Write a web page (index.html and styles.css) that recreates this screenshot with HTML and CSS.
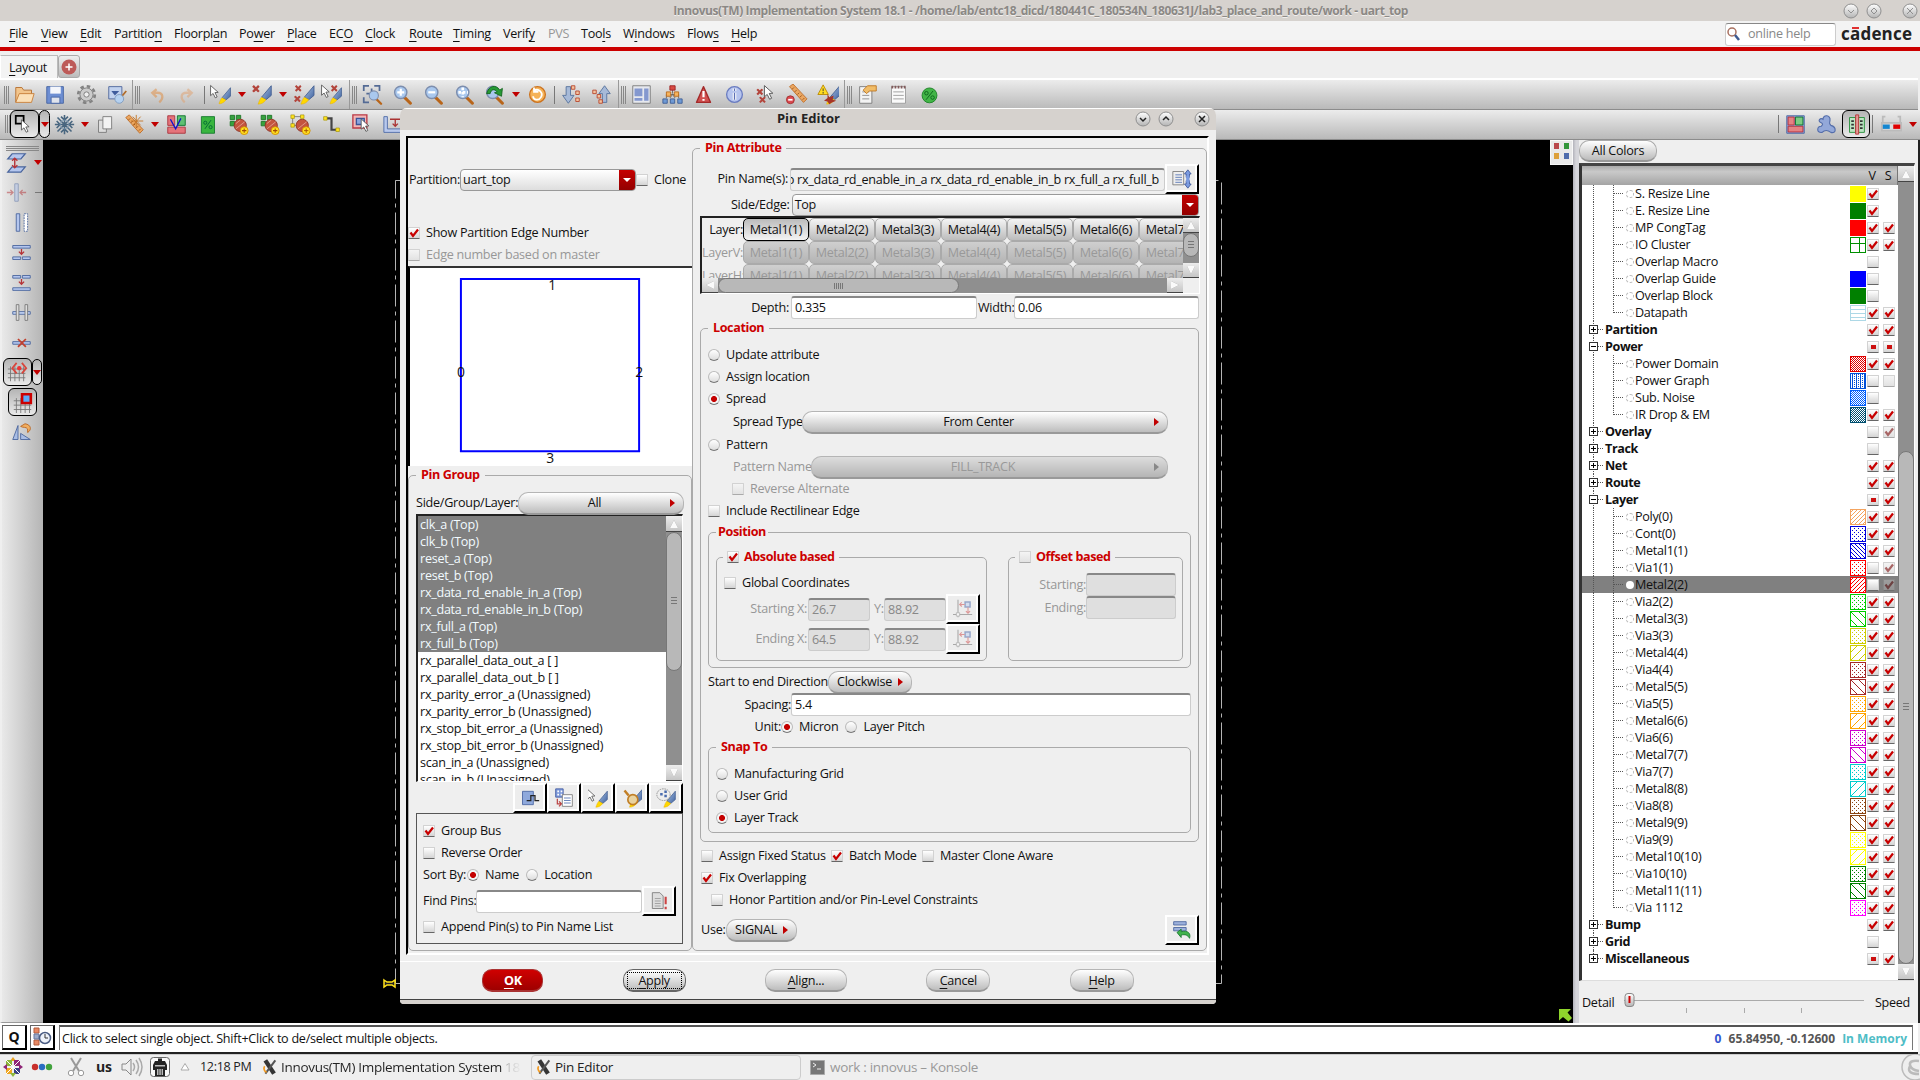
FILE: index.html
```
<!DOCTYPE html>
<html lang="en">
<head>
<meta charset="utf-8">
<title>Innovus - uart_top</title>
<link rel="stylesheet" href="styles.css">
</head>
<body>
<svg class="defs" width="0" height="0">
  <defs>
    <linearGradient id="gb" x1="0" y1="0" x2="1" y2="1"><stop offset="0" stop-color="#a9c3e6"/><stop offset="1" stop-color="#41639f"/></linearGradient>
    <linearGradient id="gk" x1="0" y1="0" x2="0" y2="1"><stop offset="0" stop-color="#fff"/><stop offset="1" stop-color="#b4b4b4"/></linearGradient>
    <symbol id="brush" viewBox="0 0 24 24"><path d="M22 2v11l-6 5-5-3z" fill="url(#gb)" stroke="#435f91"/><path d="M11 15l5 3c-2 3-5 5-9 5 1-3 2-6 4-8z" fill="#ffd800" stroke="#e8b000" stroke-width=".6"/></symbol>
    <symbol id="cur" viewBox="0 0 24 24"><path d="M3 2v14l3.500-3 3 6 2.500-1.200-3-6 4.500-.3z" fill="#fff" stroke="#4a4a4a" stroke-width="1.100"/></symbol>
    <symbol id="x" viewBox="0 0 8 8"><path d="M1 1l6 6M7 1l-6 6" stroke="#b3453c" stroke-width="2.400"/></symbol>
    <symbol id="mag" viewBox="0 0 24 24"><path d="M14 15l7 7" stroke="#b8651a" stroke-width="3.500" stroke-linecap="round"/><circle cx="10" cy="9.500" r="7" fill="#a9c8ee" stroke="#7d8eae" stroke-width="1.600"/></symbol>
    <symbol id="nofill" viewBox="0 0 24 24"><g fill="#36a23e" stroke="#1b7425"><path d="M2.500 1.500h5v5h-5zM9.500 1.500h5v5h-5zM2.500 8.500h5v5h-5z"/></g><circle cx="14" cy="13" r="7" fill="#c4543f" stroke="#8e3226"/><path d="M9 17l10-8M9 11l5-4" stroke="#e3a08f"/><circle cx="18.500" cy="19" r="4.500" fill="#ffdf20" stroke="#d18e00"/><path d="M16 19h5M18.500 16.500v5" stroke="#a44d00" stroke-width="1.200"/></symbol>
    <symbol id="grid" viewBox="0 0 24 24"><path d="M4 5v17M9 5v17M14 5v17M19 5v17M1 8h20M1 13h20M1 18h20" stroke="#777"/></symbol>
    <symbol id="ruler" viewBox="0 0 24 24"><path d="M2 4l4-3 16 17-4 4z" fill="#eaa660" stroke="#bd6c28"/><path d="M7 5l-2 2M10 8l-2 2M13 11l-2 2M16 14l-2 2M19 17l-2 2" stroke="#94501a"/></symbol>
    <symbol id="xy" viewBox="0 0 24 24"><g opacity=".5"><path d="M6 1v21M0 18.500h23" stroke="#666" stroke-width="1.300" fill="none"/><path d="M4 16.500h4v4H4z" fill="#fff" stroke="#777"/><path d="M14.500 3.500h6v6h-6z" fill="#bcd0f2" stroke="#4664a8" stroke-width="1.800"/><path d="M14 6.500H8M10.500 4L8 6.500l2.500 2.500M18 10v7M15.500 14.500L18 17l2.500-2.500" stroke="#ce4242" stroke-width="1.300" fill="none"/></g></symbol>
    <symbol id="xorg" viewBox="0 0 24 24"><path d="M5 2l13 20" stroke="#353535" stroke-width="6.500"/><path d="M20 2L5 22" stroke="#555" stroke-width="3"/><path d="M4 11a6 6 0 0 0 3 9" stroke="#f29a20" stroke-width="2.500" fill="none"/></symbol>
    <symbol id="chip" viewBox="0 0 24 24"><path d="M2 2h20v20H2z" fill="#91a6d6" stroke="#4664a2"/><path d="M3.500 3.500h7v9h-7zM3.500 14h17v6.500h-17z" fill="#e58383" stroke="#b42d3a"/><path d="M12 3.500h8.500v9H12z" fill="#7ecb83" stroke="#08702a"/></symbol>
  </defs>
</svg>

<header class="titlebar"><span>Innovus(TM) Implementation System 18.1 - /home/lab/entc18_dicd/180441C_180534N_180631J/lab3_place_and_route/work - uart_top</span>
  <div class="winbtns">
    <svg viewBox="0 0 16 16"><circle cx="8" cy="8" r="7"/><path d="M5 7l3 3 3-3"/></svg>
    <svg viewBox="0 0 16 16"><circle cx="8" cy="8" r="7"/><path d="M8 5l3 3-3 3-3-3z"/></svg>
    <svg class="last" viewBox="0 0 16 16"><circle cx="8" cy="8" r="7"/><path d="M5 5l6 6M11 5l-6 6"/></svg>
  </div>
</header>
<nav class="menubar">
  <span class="m1"><u>F</u>ile</span><span class="m2"><u>V</u>iew</span><span class="m3"><u>E</u>dit</span><span class="m4">Partitio<u>n</u></span><span class="m5">Floorpl<u>a</u>n</span><span class="m6">Po<u>w</u>er</span><span class="m7"><u>P</u>lace</span><span class="m8">EC<u>O</u></span><span class="m9"><u>C</u>lock</span><span class="m10"><u>R</u>oute</span><span class="m11"><u>T</u>iming</span><span class="m12">Verif<u>y</u></span><span class="m13 dis">PVS</span><span class="m14">Too<u>l</u>s</span><span class="m15">W<u>i</u>ndows</span><span class="m16">Flow<u>s</u></span><span class="m17"><u>H</u>elp</span>
  <div class="help"><svg width="14" height="14" viewBox="0 0 14 14"><circle cx="6" cy="5" r="4" fill="#fff" stroke="#a8705f" stroke-width="1.500"/><path d="M9 8l4 5" stroke="#3f5b91" stroke-width="2.500"/></svg>online help</div>
  <div class="brand">c<span class="bar">a</span>dence</div>
</nav>
<div class="tabs"><div class="tab"><u>L</u>ayout</div><div class="addtab"><svg width="16" height="16" viewBox="0 0 16 16"><circle cx="8" cy="8" r="7.500" fill="#bd5a58"/><path d="M8 4.500v7M4.500 8h7" stroke="#fff" stroke-width="1.500"/></svg></div></div>

<div class="toolbar t1">
  <div class="grp g1"><i class="grip"></i>
    <svg viewBox="0 0 24 24"><path d="M2 21V4h7l2 3h9v4" fill="#f2c58c" stroke="#b36c2b"/><path d="M2 21l4-10h17l-3 10z" fill="#fbe0b8" stroke="#c67c35"/></svg>
    <svg viewBox="0 0 24 24"><path d="M2 3h19v19H2z" fill="#6d8ed2" stroke="#4462a0"/><path d="M6 3h12v8H6z" fill="#f4f6fb"/><path d="M7 15h10v7H7z" fill="#dfe3ec" stroke="#4462a0"/></svg>
    <svg viewBox="0 0 24 24"><circle cx="12" cy="12" r="9.500" fill="none" stroke="#838383" stroke-width="3" stroke-dasharray="4 3.460"/><circle cx="12" cy="12" r="7.500" fill="#ccc" stroke="#777"/><circle cx="12" cy="12" r="3" fill="#eee" stroke="#777"/></svg>
    <svg viewBox="0 0 24 24"><path d="M2 3h15v14H2z" fill="#c2d2ee" stroke="#4a6299"/><path d="M5 8l4 5 5-5z" fill="#3f5c9c"/><path d="M17 14l5-6" stroke="#b06b2a" stroke-width="2"/><circle cx="14" cy="17" r="5" fill="#b5d1f0" stroke="#7e99bd"/></svg>
  </div>
  <div class="grp g2"><i class="grip"></i>
    <svg class="faint" viewBox="0 0 24 24"><path d="M6 10h6c7 0 7 7 2 11M11 6l-5 4 5 5" fill="none" stroke="#e08a3c" stroke-width="2.600"/></svg>
    <svg class="faint" viewBox="0 0 24 24"><path d="M18 10h-6c-7 0-7 7-2 11M13 6l5 4-5 5" fill="none" stroke="#e0a06c" stroke-width="2.600"/></svg>
    <i class="sep"></i>
    <svg viewBox="0 0 24 24"><use href="#cur" x="-3" y="-1" width="20" height="22"/><use href="#brush" x="3" y="2" width="21" height="22"/></svg><b class="dn"></b>
    <svg viewBox="0 0 24 24"><use href="#brush"/><use href="#x" x="0" y="1" width="9" height="9"/></svg><b class="dn"></b>
    <svg viewBox="0 0 24 24"><use href="#brush" x="2"/><use href="#x" x="2" y="1" width="8" height="8"/><use href="#x" x="1" y="13" width="8" height="8"/></svg>
    <svg viewBox="0 0 24 24"><use href="#brush" x="3" y="1" width="21"/><use href="#cur" x="-3" y="-1" width="20" height="21"/><use href="#x" x="10" y="1" width="8" height="8"/></svg>
  </div>
  <div class="grp g3"><i class="grip"></i>
    <svg viewBox="0 0 24 24"><path d="M2 8V2h6M14 2h6v6M2 15v6h6M5 11h12M11 5v12" stroke="#546b95" stroke-width="2" fill="none"/><use href="#mag" x="6" y="6" width="18" height="18"/></svg>
    <svg viewBox="0 0 24 24"><use href="#mag"/><path d="M6 9.500h8M10 5.500v8" stroke="#fff" stroke-width="2.500"/></svg>
    <svg viewBox="0 0 24 24"><use href="#mag"/><path d="M6 9.500h8" stroke="#fff" stroke-width="2.500"/></svg>
    <svg viewBox="0 0 24 24"><use href="#mag"/><path d="M10 4v11M5 9.500h11" stroke="#fff" stroke-width="3" stroke-dasharray="3 2"/></svg>
    <svg viewBox="0 0 24 24"><use href="#mag"/><path d="M3 11c2-9 11-11 15-4l3-2-1 9-8-4 3-1c-3-4-7-3-8 2z" fill="#279a35" stroke="#11641c"/></svg><b class="dn"></b>
    <svg viewBox="0 0 24 24"><circle cx="12" cy="12" r="9" fill="#f5b257" stroke="#cc7320" stroke-width="1.500"/><path d="M8 8c5-4 11 2 8 7s-9 3-9-1M8 4v5h5" fill="none" stroke="#fff" stroke-width="2"/></svg>
    <i class="sep"></i>
    <svg viewBox="0 0 24 24"><path d="M7 3h5v10h4l-6.500 9L3 13h4z" fill="#a7bad8" stroke="#53709c"/><path d="M13 2h4v4h-4zM18 8h4v4h-4zM18 16h4v4h-4z" fill="#f2c3a0" stroke="#b7452c"/></svg>
    <svg viewBox="0 0 24 24"><path d="M13 21V11H9l6.500-9 6.500 9h-4v10z" fill="#a7bad8" stroke="#53709c"/><path d="M2 7h4v4H2zM7 12h4v4H7zM9 18h4v4H9z" fill="#f2c3a0" stroke="#b7452c"/></svg>
  </div>
  <div class="grp g4"><i class="grip"></i>
    <svg viewBox="0 0 24 24"><path d="M2 2h20v20H2z" fill="#e6e8ee" stroke="#777"/><path d="M4 5h9v9H4zM15 5h5v14h-5zM4 16h9v3H4z" fill="#8498cf"/></svg>
    <svg viewBox="0 0 24 24"><path d="M12 6v5M5 16v-4h14v4M12 12l-3 4M12 12l3 4" stroke="#666" fill="none"/><path d="M9 2h6v5H9z" fill="#d84b44" stroke="#9a2020"/><path d="M5 9h5v5H5zM14 9h5v5h-5z" fill="#f5b35d" stroke="#b86818"/><path d="M1 17h5v5H1zM9.500 17h5v5h-5zM18 17h5v5h-5z" fill="#6f9ad5" stroke="#3c5b94"/></svg>
    <svg viewBox="0 0 24 24"><path d="M12 3l8 18H4z" fill="#d15050" stroke="#a32a2a" stroke-linejoin="round" stroke-width="1.500"/><path d="M12 8v7M12 17v2" stroke="#fff" stroke-width="2.500"/></svg>
    <svg viewBox="0 0 24 24"><circle cx="12" cy="12" r="9" fill="#b6c4ee" stroke="#6a7cc0" stroke-width="1.500"/><path d="M12 5v3M12 10v8" stroke="#fff" stroke-width="4"/><path d="M12 5v3M12 10v8" stroke="#5d6fb5" stroke-width="1.500"/></svg>
    <svg viewBox="0 0 24 24"><use href="#cur" x="8" y="0" width="22" height="22"/><use href="#x" x="1" y="5" width="9" height="8"/><use href="#x" x="4" y="14" width="9" height="8"/></svg>
    <svg viewBox="0 0 24 24"><use href="#ruler" x="2" y="-1"/><circle cx="5" cy="18" r="4.500" fill="#db4951" stroke="#a02f2d"/><path d="M2.500 18h5" stroke="#fff" stroke-width="2"/></svg>
    <svg viewBox="0 0 24 24"><use href="#brush" x="4"/><path d="M7 1l6 11H1z" fill="#ffdc20" stroke="#b98700"/><path d="M7 5v3M7 9v2" stroke="#333"/><path d="M12 11l2 4 5-2-1 5 4 1-5 2-3 2-2-3-4-1 4-3z" fill="#a63528"/></svg>
  </div>
  <div class="grp g5"><i class="grip"></i>
    <svg viewBox="0 0 24 24"><path d="M3 3h14v19H3z" fill="#f3f3f3" stroke="#777"/><path d="M6 9h8M6 13h8M6 17h8" stroke="#888"/><path d="M7 7l5-5h10v6h-8l-3 3z" fill="#f1bd68" stroke="#bd7521"/></svg>
    <svg viewBox="0 0 24 24"><path d="M4 3h16v19H4z" fill="#fafafa" stroke="#999"/><path d="M4 3.500h16" stroke="#825b5b" stroke-width="3" stroke-dasharray="2 1.500"/><path d="M6 9h12M6 13h12M6 17h12" stroke="#999"/></svg>
    <svg viewBox="0 0 24 24"><circle cx="12" cy="13" r="8.500" fill="#42b547" stroke="#197f24"/><path d="M8 18l8-10" stroke="#095f1a"/><circle cx="8.500" cy="10.500" r="2" fill="none" stroke="#095f1a"/><circle cx="15.500" cy="15.500" r="2" fill="none" stroke="#095f1a"/></svg>
  </div>
</div>

<div class="toolbar t2">
  <i class="grip"></i>
  <div class="pressed p1"><svg viewBox="0 0 24 24"><path d="M2 2h9v9H2z" fill="none" stroke="#000" stroke-width="2"/><use href="#cur" x="6" y="5" width="20" height="20"/></svg></div><div class="pressed p2"><b class="dn"></b></div>
  <svg viewBox="0 0 24 24"><path d="M12 1v22M1 12h22M4 4l16 16M20 4L4 20M8 3l4 4 4-4M8 21l4-4 4 4M3 8l4 4-4 4M21 8l-4 4 4 4" stroke="#49667f" stroke-width="1.800" fill="none"/><circle cx="12" cy="12" r="5" fill="none" stroke="#7e9ab3"/></svg><b class="dn"></b>
  <svg class="c26" viewBox="0 0 24 24"><path d="M4 7h9v14H4z" fill="#ddd" stroke="#777"/><path d="M9 3h10v14H9z" fill="#f2f2f2" stroke="#777"/></svg>
  <svg class="c34" viewBox="0 0 24 24"><use href="#ruler"/><path d="M14 1v14M8 8h14M10 3l9 10M19 3l-9 10" stroke="#c37324"/></svg><b class="dn"></b>
  <svg viewBox="0 0 24 24"><path d="M2 2h8v11H2zM2 15h20v7H2z" fill="#e5747b" stroke="#a8313a"/><path d="M13 2h9v11h-9z" fill="#5fc073" stroke="#08702a"/><path d="M5 6l6 11 6-12" stroke="#11c" stroke-width="1.500" fill="none"/></svg>
  <svg viewBox="0 0 24 24"><path d="M5 3h15v19H5z" fill="#39b53f" stroke="#13782b"/><path d="M9 17l7-10" stroke="#063"/><circle cx="9.500" cy="10" r="1.800" fill="none" stroke="#063"/><circle cx="15.500" cy="15" r="1.800" fill="none" stroke="#063"/></svg>
  <svg viewBox="0 0 24 24"><use href="#nofill"/></svg>
  <svg viewBox="0 0 24 24"><use href="#nofill"/></svg>
  <svg viewBox="0 0 24 24"><path d="M3 3h11M3 3v10h6" fill="none" stroke="#777"/><circle cx="14" cy="13" r="7" fill="#c4543f" stroke="#8e3226"/><path d="M9 17l10-8" stroke="#e3a08f"/><path d="M1 1h4v4H1zM12 1h4v4h-4zM1 11h4v4H1z" fill="#ffe320" stroke="#9a8b00" stroke-width=".7"/><circle cx="18.500" cy="19" r="4.500" fill="#ffdf20" stroke="#d18e00"/><path d="M16 19h5M18.500 16.500v5" stroke="#a44d00"/></svg>
  <svg viewBox="0 0 24 24"><path d="M6 5h6v13h6" fill="none" stroke="#444" stroke-width="2.500"/><path d="M3 3h4v4H3zM17 16h4v4h-4z" fill="#ffe320" stroke="#9a8b00" stroke-width=".7"/></svg>
  <svg viewBox="0 0 24 24"><path d="M1 1h16v15H1z" fill="#f2b6b6" stroke="#ba3945" stroke-width="1.500"/><path d="M5 5h9v7H5z" fill="#8aa4de" stroke="#3b5597" stroke-width="1.500"/><use href="#cur" x="8" y="4" width="20" height="20"/></svg>
  <svg viewBox="0 0 24 24"><path d="M1 3h4v14h19v4H1z" fill="#b9c9ec" stroke="#4a68a5"/><path d="M8 6h16M14 6v7M11 11l3 3 3-3" stroke="#a33" stroke-width="1.500" fill="none"/></svg>
  <i class="grow"></i><i class="sep"></i>
  <svg viewBox="0 0 24 24"><use href="#chip"/></svg>
  <svg viewBox="0 0 24 24"><path d="M8 6c0-6 9-5 8 1 0 3-2 3 1 6 7 2 6 10 0 8-4-3-7-3-10 0-7 1-6-7-1-7 2-2 2-3 0-4-5-2-1-6 2-4z" fill="#93a8d9" stroke="#536daa" stroke-width="1.300"/></svg>
  <div class="pressed p3"><svg viewBox="0 0 24 24"><path d="M4 4h7v17H4zM14 4h7v17h-7z" fill="#bce5c3" stroke="#218b36"/><path d="M6 8h3M6 12h3M6 16h3M16 8h3M16 12h3M16 16h3" stroke="#333" stroke-width="2"/><path d="M11 1h3.500v22H11z" fill="#e59696" stroke="#b52e2e"/></svg></div><i class="sep s0"></i>
  <svg class="glasses" viewBox="0 0 24 24"><path d="M2 10V3h3M22 10V3h-3M1 10h22v9H1z" fill="#ddd" stroke="#bbb" stroke-width="2"/><path d="M2 12h8v5H2z" fill="#1486d0"/><path d="M14 12h8v5h-8z" fill="#e00000"/></svg><b class="dn"></b>
</div>

<main class="work">
  <aside class="side">
    <i class="hgrip"></i>
    <div class="sd"><svg viewBox="0 0 24 24"><path d="M7 2h15l-5 6H2zM7 17h15l-5 6H2z" fill="#b4c6ee" stroke="#48649c" stroke-width="1.400"/><path d="M10 7v11M7 10l3-3 3 3M7 15l3 3 3-3" stroke="#b53338" stroke-width="1.600" fill="none"/></svg><b class="dn"></b></div>
    <div class="sd faint"><svg viewBox="0 0 24 24"><path d="M10 2h4v20h-4z" fill="#b4c6ee" stroke="#48649c"/><path d="M1 12h6M5 9l3 3-3 3M23 12h-6M19 9l-3 3 3 3" stroke="#b53338" stroke-width="1.500" fill="none"/></svg><b class="dash"></b></div>
    <div class="sc"><svg viewBox="0 0 24 24"><path d="M6 2h4v20H6z" fill="#b4c6ee" stroke="#48649c"/><path d="M15 2h4v20h-4z" fill="#fff" stroke="#48649c" stroke-dasharray="2 1"/></svg></div>
    <div class="sc"><svg viewBox="0 0 24 24"><path d="M2 4h20v3H2zM2 17h9v3H2zM13 17h9v3h-9z" fill="#b4c6ee" stroke="#48649c"/><path d="M12 8v6M9 11l3 3 3-3" stroke="#b53338" stroke-width="1.500" fill="none"/></svg></div>
    <div class="sc"><svg viewBox="0 0 24 24"><path d="M2 18h20v3H2zM2 4h9v3H2zM13 4h9v3h-9z" fill="#b4c6ee" stroke="#48649c"/><path d="M12 8v6M9 11l3 3 3-3" stroke="#b53338" stroke-width="1.500" fill="none"/></svg></div>
    <div class="sc"><svg viewBox="0 0 24 24"><path d="M2 11h20v3H2z" fill="#c6d6f6" stroke="#48649c"/><path d="M6 3h3v18H6zM16 3h3v18h-3z" fill="#ddd" stroke="#777"/></svg></div>
    <div class="sc"><svg viewBox="0 0 24 24"><path d="M2 11h20v3H2z" fill="#b4c6ee" stroke="#48649c"/><path d="M8 8l9 9M17 8l-9 9" stroke="#c2402e" stroke-width="2"/></svg></div>
    <div class="sp"><div class="pressed q1"><svg viewBox="0 0 24 24"><use href="#grid"/><path d="M11 1L6 7l5 6M17 1l5 6-5 6" stroke="#d8453c" stroke-width="2" fill="none"/><circle cx="14" cy="7" r="2.500" fill="#e33"/></svg></div><div class="pressed q2"><b class="dn"></b></div></div>
    <div class="sp2"><div class="pressed q3"><svg viewBox="0 0 24 24"><use href="#grid" x="1" y="2"/><path d="M11.500 2.500h10v10h-10z" fill="#5ba9f7" stroke="#cc0000" stroke-width="3"/></svg></div></div>
    <div class="sc"><svg viewBox="0 0 24 24"><path d="M2 20L8 4v16zM11 20V13l11 7z" fill="#a9bde4" stroke="#48649c"/><path d="M11 5l5-3c7 1 8 7 3 10v-4c-2-3-5-1-8-3z" fill="#f0ae60" stroke="#b96420"/></svg></div>
  </aside>
  <section class="canvas">
    <svg class="design" width="1530" height="883" viewBox="43 140 1530 883"><path d="M395.500 180.500H1221.500V983.500H395.500z" fill="none" stroke="#b4b4b4" stroke-dasharray="22 5 4 5"/><path d="M384 980l3 2h5l3-2v7l-3-2h-5l-3 2z" fill="#222" stroke="#ffe21a" stroke-width="1.500"/><path d="M1559 1009h12l-3.500 3.500 4.500 5.500-3.500 3.500-5.500-4.500-4 3.500z" fill="#8fd42c"/></svg>
    <div class="corner"><i class="c1"></i><i class="c2"></i><i class="c3"></i><i class="c4"></i></div>
  </section>
  <div class="split"></div>
  <aside class="colors">
    <div class="allc">All Colors</div>
    <div class="treebox">
      <div class="treemain"><div class="treehead"><span>V</span><span>S</span></div><div class="tree" id="tree"></div></div>
      <div class="vs"><i class="ar up"></i><i class="track"><i class="thumb"></i></i><i class="ar down"></i></div>
    </div>
    <div class="detail"><span>Detail</span><svg width="250" height="30" viewBox="0 0 250 30"><path d="M2 11.500h240" stroke="#aaa"/><path d="M64.500 19v5M122.500 19v5M179.500 19v5" stroke="#aaa"/><rect x="3" y="4.500" width="9" height="13" rx="3" fill="url(#gk)" stroke="#888"/><path d="M7.500 7v7" stroke="#c00" stroke-width="2"/></svg><span>Speed</span></div>
  </aside>
</main>

<div class="status">
  <div class="qb">Q</div><div class="qb q2b"><svg width="20" height="20" viewBox="0 0 20 20"><path d="M2 1h5v5H2zM2 13h5v5H2z" fill="#e88964" stroke="#b35b3b"/><path d="M2 7h5v5H2z" fill="#9dabc9" stroke="#66789f"/><circle cx="13" cy="11" r="5.500" fill="#eef2fa" stroke="#4b5d83" stroke-width="1.500"/><path d="M13 7v4h3" stroke="#333" fill="none"/></svg></div>
  <div class="msg"><span>Click to select single object. Shift+Click to de/select multiple objects.</span><b><i class="n0">0</i> <i class="xyv">65.84950, -0.12600</i> <i class="mem">In Memory</i></b></div>
</div>

<footer class="taskbar">
  <svg class="k1" width="20" height="20" viewBox="0 0 20 20"><path d="M10 0l3 4H7z" fill="#e8a020"/><path d="M3 3h6v6H3z" fill="#8cb63a"/><path d="M11 3h6v6h-6z" fill="#8f2577"/><path d="M3 11h6v6H3z" fill="#efa724"/><path d="M11 11h6v6h-6z" fill="#3a3f85"/><path d="M0 10l4-3v6zM20 10l-4-3v6z" fill="#8f2577"/><path d="M10 20l3-4H7z" fill="#8cb63a"/><path d="M3 3l14 14M17 3L3 17" stroke="#fff"/></svg>
  <svg class="k2" width="22" height="10" viewBox="0 0 22 10"><circle cx="4" cy="5" r="3.200" fill="#c8302c"/><circle cx="11" cy="5" r="3.200" fill="#2a6ec2"/><circle cx="18" cy="5" r="3.200" fill="#40a23c"/></svg>
  <svg class="k3" width="18" height="20" viewBox="0 0 18 20"><path d="M4 1l8 13M14 1L6 14" stroke="#999" stroke-width="2"/><circle cx="4" cy="16" r="2.700" fill="#fff" stroke="#999"/><circle cx="14" cy="16" r="2.700" fill="#fff" stroke="#999"/></svg>
  <b class="us">us</b>
  <svg class="k4" width="22" height="22" viewBox="0 0 22 22"><path d="M1 8h4l5-5v16l-5-5H1z" fill="#eee" stroke="#888"/><path d="M12 7q3 4 0 8M15 4q5 7 0 14M18 2q6 9 0 18" stroke="#aaa" stroke-width="1.500" fill="none"/></svg>
  <svg class="k5" width="20" height="22" viewBox="0 0 20 22"><rect x=".5" y="1.500" width="19" height="19" rx="3" fill="#f8f8f8" stroke="#666"/><path d="M8 2.500h4V5h3l2 4v5h-2v6H5v-6H3V9l2-4h3z" fill="#222"/><path d="M5 9h10v1.500H5zM7 13h1.500v6H7zM9.300 13h1.500v6H9.300zM11.600 13H13v6h-1.400z" fill="#bbb"/></svg>
  <svg class="k6" width="10" height="10" viewBox="0 0 10 10"><path d="M5 1.500l4 6.500H1z" fill="#fff" stroke="#aaa"/></svg>
  <span class="clock">12:18 PM</span>
  <div class="task a"><svg width="16" height="16" viewBox="0 0 24 24"><use href="#xorg"/></svg><span class="fade">Innovus(TM) Implementation System 18</span></div>
  <div class="task b"><svg width="16" height="16" viewBox="0 0 24 24"><use href="#xorg"/></svg><span>Pin Editor</span></div>
  <div class="task c"><svg width="15" height="15" viewBox="0 0 15 15"><path d="M.5.500h14v14H.5z" fill="#777" stroke="#aaa"/><path d="M3 3l3 2-3 2M7 9h4" stroke="#eee" fill="none"/></svg><span>work : innovus – Konsole</span></div>
  <svg class="swirl" width="20" height="26" viewBox="0 0 20 26"><circle cx="15" cy="13" r="13" fill="#eee" stroke="#bbb" stroke-width="1.500"/><path d="M19 7q-10-1-9 4t9 6M10 12q-4 8 9 8" stroke="#bbb" stroke-width="2.500" fill="none"/></svg>
</footer>

<div class="dialog">
  <div class="dtitle"><span>Pin Editor</span>
    <div class="winbtns dark">
      <svg viewBox="0 0 16 16"><circle cx="8" cy="8" r="7"/><path d="M5 7l3 3 3-3"/></svg>
      <svg class="second" viewBox="0 0 16 16"><circle cx="8" cy="8" r="7"/><path d="M5 9l3-3 3 3"/></svg>
      <svg class="last" viewBox="0 0 16 16"><circle cx="8" cy="8" r="7"/><path d="M5 5l6 6M11 5l-6 6"/></svg>
    </div>
  </div>
  <div class="dbody">
    <div class="left">
      <div class="row part"><span>Partition:</span><div class="combo pc"><span>uart_top</span><i></i></div><i class="cb"></i><span class="lb">Clone</span></div>
      <div class="row show"><i class="cb on"></i><span class="lb">Show Partition Edge Number</span></div>
      <div class="row dis"><i class="cb off"></i><span class="lb">Edge number based on master</span></div>
      <svg class="preview" width="284" height="200" viewBox="0 0 284 200"><path d="M51 11h180v174H51z" fill="none" stroke="#0000ff" stroke-width="2"/><text x="143" y="22">1</text><text x="51" y="110">0</text><text x="231" y="110">2</text><text x="141" y="197">3</text></svg>
      <fieldset class="pg"><legend>Pin Group</legend>
        <div class="row r1"><span>Side/Group/Layer:</span><div class="pill"><span>All</span><b class="rt"></b></div></div>
        <div class="list"><div class="items">
          <p class="s">clk_a (Top)</p><p class="s">clk_b (Top)</p><p class="s">reset_a (Top)</p><p class="s">reset_b (Top)</p><p class="s">rx_data_rd_enable_in_a (Top)</p><p class="s">rx_data_rd_enable_in_b (Top)</p><p class="s">rx_full_a (Top)</p><p class="s">rx_full_b (Top)</p><p>rx_parallel_data_out_a [ ]</p><p>rx_parallel_data_out_b [ ]</p><p>rx_parity_error_a (Unassigned)</p><p>rx_parity_error_b (Unassigned)</p><p>rx_stop_bit_error_a (Unassigned)</p><p>rx_stop_bit_error_b (Unassigned)</p><p>scan_in_a (Unassigned)</p><p>scan_in_b (Unassigned)</p>
        </div><div class="vs"><i class="ar up"></i><i class="track"><i class="thumb"></i></i><i class="ar down"></i></div></div>
        <div class="tools">
          <div class="bev"><svg viewBox="0 0 24 24"><path d="M3 4h13v16H3z" fill="#8fa9dc" stroke="#4662a0"/><path d="M8 15h5V9h5v6h5" fill="none" stroke="#222" stroke-width="1.500"/></svg></div>
          <div class="bev"><svg viewBox="0 0 24 24"><path d="M2 1h9v10H2z" fill="#7e9ada" stroke="#4059a0"/><path d="M4 4h2M8 4h2M4 8h2M8 8h2" stroke="#fff" stroke-width="2"/><path d="M4 13v6h4M6 16l3 3-3 3" fill="none" stroke="#b44" stroke-width="1.500"/><path d="M10 8h12v14H10z" fill="#fff" stroke="#777"/><path d="M12 12h8M12 15h8M12 18h8" stroke="#5070b0"/></svg></div>
          <div class="bev"><svg viewBox="0 0 24 24"><use href="#cur" x="-3" y="-1" width="20" height="22"/><use href="#brush" x="3" y="1" width="22"/></svg></div>
          <div class="bev"><svg viewBox="0 0 24 24"><use href="#brush" x="2"/><circle cx="13" cy="14" r="6" fill="#e9d3a0" stroke="#c17e25" stroke-width="2"/><path d="M3 3l5 6" stroke="#c17e25" stroke-width="3"/></svg></div>
          <div class="bev"><svg viewBox="0 0 24 24"><use href="#brush" x="3" y="1" width="22"/><ellipse cx="9" cy="8" rx="8" ry="7" fill="#eee" stroke="#888" stroke-dasharray="2 1"/><path d="M5 6h3v3H5zM10 3h3v3h-3zM10 8h3v3h-3z" fill="#4a6cae"/></svg></div>
        </div>
        <div class="box">
          <div class="row"><i class="cb on"></i><span class="lb">Group Bus</span></div>
          <div class="row"><i class="cb"></i><span class="lb">Reverse Order</span></div>
          <div class="row"><span class="sb">Sort By:</span><i class="rd on"></i><span class="lr">Name</span><i class="rd sp8"></i><span class="lr">Location</span></div>
          <div class="row find"><span>Find Pins:</span><div class="inp fp"></div><div class="bev"><svg viewBox="0 0 24 24"><path d="M4 2h9l4 4v15H4z" fill="#ddd" stroke="#777"/><path d="M7 9h7M7 12h7M7 15h7M7 18h7" stroke="#999"/><path d="M20 7v9M20 19v3" stroke="#c44" stroke-width="2.500"/></svg></div></div>
          <div class="row"><i class="cb"></i><span class="lb">Append Pin(s) to Pin Name List</span></div>
        </div>
      </fieldset>
    </div>

    <fieldset class="pa"><legend>Pin Attribute</legend>
      <div class="row pins"><span class="rl">Pin Name(s):</span><div class="inp ro"><span>reset_b rx_data_rd_enable_in_a rx_data_rd_enable_in_b rx_full_a rx_full_b</span></div><div class="bev"><svg viewBox="0 0 24 24"><path d="M1 3h13v16H1z" fill="#eee" stroke="#777"/><path d="M4 7h8M4 10h8M4 13h8M4 16h8" stroke="#4f70b5"/><path d="M19 1l4 5h-2v4h-4V6h-2zM19 23l4-5h-2v-4h-4v4h-2z" fill="#7b9be0" stroke="#3c5697"/><path d="M17 8h4v8h-4z" fill="#7b9be0"/></svg></div></div>
      <div class="row"><span class="rl">Side/Edge:</span><div class="combo se"><span>Top</span><i></i></div></div>
      <div class="layers">
        <div class="lv"><div class="lrows">
          <div class="lrow"><span>Layer:</span><b class="sel">Metal1(1)</b><b>Metal2(2)</b><b>Metal3(3)</b><b>Metal4(4)</b><b>Metal5(5)</b><b>Metal6(6)</b><b>Metal7(7)</b></div>
          <div class="lrow d"><span>LayerV:</span><b>Metal1(1)</b><b>Metal2(2)</b><b>Metal3(3)</b><b>Metal4(4)</b><b>Metal5(5)</b><b>Metal6(6)</b><b>Metal7(7)</b></div>
          <div class="lrow d"><span>LayerH:</span><b>Metal1(1)</b><b>Metal2(2)</b><b>Metal3(3)</b><b>Metal4(4)</b><b>Metal5(5)</b><b>Metal6(6)</b><b>Metal7(7)</b></div>
        </div><div class="vs"><i class="ar up"></i><i class="track"><i class="thumb"></i></i><i class="ar down"></i></div></div>
        <div class="hs"><i class="ar lf"></i><i class="track"><i class="thumb"></i></i><i class="ar rg"></i></div>
      </div>
      <div class="row depth"><span class="rl">Depth:</span><div class="inp dw">0.335</div><span class="wl">Width:</span><div class="inp dw2">0.06</div></div>
      <fieldset class="loc"><legend>Location</legend>
        <div class="row first"><i class="rd"></i><span class="lr">Update attribute</span></div>
        <div class="row"><i class="rd"></i><span class="lr">Assign location</span></div>
        <div class="row"><i class="rd on"></i><span class="lr">Spread</span></div>
        <div class="row st"><span class="stl">Spread Type</span><div class="pill"><span>From Center</span><b class="rt"></b></div></div>
        <div class="row"><i class="rd"></i><span class="lr">Pattern</span></div>
        <div class="row pn dis"><span class="pnl">Pattern Name</span><div class="pill dp"><span>FILL_TRACK</span><b class="rt"></b></div></div>
        <div class="row ra dis"><i class="cb off"></i><span class="lb">Reverse Alternate</span></div>
        <div class="row"><i class="cb"></i><span class="lb">Include Rectilinear Edge</span></div>
        <fieldset class="pos"><legend>Position</legend>
          <div class="cols">
            <fieldset class="abs"><legend><i class="cb on"></i>Absolute based</legend>
              <div class="row g"><i class="cb"></i><span class="lb">Global Coordinates</span></div>
              <div class="row co dis"><span class="cx">Starting X:</span><div class="inp di">26.7</div><span class="cy">Y:</span><div class="inp di">88.92</div><div class="bev"><svg viewBox="0 0 24 24"><use href="#xy"/></svg></div></div>
              <div class="row co dis"><span class="cx">Ending X:</span><div class="inp di">64.5</div><span class="cy">Y:</span><div class="inp di">88.92</div><div class="bev"><svg viewBox="0 0 24 24"><use href="#xy"/></svg></div></div>
            </fieldset>
            <fieldset class="off2"><legend><i class="cb off"></i>Offset based</legend>
              <div class="row o dis"><span class="cx">Starting:</span><div class="inp di"></div></div>
              <div class="row dis"><span class="cx">Ending:</span><div class="inp di"></div></div>
            </fieldset>
          </div>
        </fieldset>
        <div class="row dir"><span>Start to end Direction</span><div class="pill"><span>Clockwise</span><b class="rt"></b></div></div>
        <div class="row spc"><span>Spacing:</span><div class="inp">5.4</div></div>
        <div class="row unit"><span>Unit:</span><i class="rd on"></i><span class="lr">Micron</span><i class="rd sp8"></i><span class="lr">Layer Pitch</span></div>
        <fieldset class="snap"><legend>Snap To</legend>
          <div class="row first"><i class="rd"></i><span class="lr">Manufacturing Grid</span></div>
          <div class="row"><i class="rd"></i><span class="lr">User Grid</span></div>
          <div class="row"><i class="rd on"></i><span class="lr">Layer Track</span></div>
        </fieldset>
      </fieldset>
      <div class="row fix"><i class="cb"></i><span class="lb w1">Assign Fixed Status</span><i class="cb on"></i><span class="lb w2">Batch Mode</span><i class="cb"></i><span class="lb">Master Clone Aware</span></div>
      <div class="row"><i class="cb on"></i><span class="lb">Fix Overlapping</span></div>
      <div class="row honor"><i class="cb"></i><span class="lb">Honor Partition and/or Pin-Level Constraints</span></div>
      <div class="row use"><span>Use:</span><div class="pill"><span>SIGNAL</span><b class="rt"></b></div><i class="grow"></i><div class="bev"><svg viewBox="0 0 24 24"><path d="M2 2h15v4H2zM2 9h15v4H2z" fill="#9db1dc" stroke="#47619b"/><path d="M6 15l5-4v3c8-2 12 2 10 8-2-4-5-5-10-4v3z" fill="#41b34c" stroke="#15762b"/></svg></div></div>
    </fieldset>
  </div>
  <div class="dbtns"><div class="pill ok"><u>O</u>K</div><div class="pill ap"><em><u>A</u>pply</em></div><div class="pill al"><u>A</u>lign...</div><div class="pill ca"><u>C</u>ancel</div><div class="pill ca"><u>H</u>elp</div></div>
  <div class="dfoot"></div>
</div>
<script src="script.js"></script>
</body>
</html>
```
FILE: styles.css
```
* { box-sizing: border-box; }
html, body { margin: 0; height: 1080px; overflow: hidden; }
body { width: 1920px; display: flex; flex-direction: column; background: #efefef; color: #111; font: 12.6px/18px "Open Sans", "Noto Sans", sans-serif; letter-spacing: -0.27px; white-space: nowrap; }
p, fieldset, legend { margin: 0; padding: 0; }
i, em { font-style: normal; }
u { text-underline-offset: 3px; text-decoration-thickness: 1px; }
svg { flex: none; display: block; }
.defs { position: absolute; }
.dis { color: #979797; }
.grow { flex: 1; }
.faint { opacity: .5; }

.titlebar { height: 21px; flex: none; background: #d6d2ce; display: flex; align-items: center; justify-content: flex-end; color: #8b8885; font-weight: bold; font-size: 12px; letter-spacing: -.41px; text-shadow: 0 1px #f2f0ee; }
.titlebar .winbtns { margin-left: 435px; }
.winbtns { display: flex; }
.winbtns svg { width: 16px; height: 16px; margin-right: 7px; fill: url(#gk); stroke: #8f8f8f; }
.winbtns .last { margin-left: 13px; margin-right: 2px; }
.winbtns path { fill: none; }
.winbtns.dark path { stroke: #222; stroke-width: 1.5; }
.menubar { height: 26px; flex: none; background: #f3f3f3; display: flex; align-items: center; padding-left: 9px; }
.m1 { width: 32px; } .m2 { width: 39px; } .m3 { width: 34px; } .m4 { width: 60px; } .m5 { width: 65px; } .m6 { width: 48px; } .m7 { width: 42px; } .m8 { width: 36px; } .m9 { width: 44px; } .m10 { width: 44px; } .m11 { width: 50px; } .m12 { width: 45px; } .m13 { width: 33px; } .m14 { width: 42px; } .m15 { width: 64px; } .m16 { width: 44px; }
.help { margin-left: auto; width: 111px; height: 23px; background: #fff; border: 1px solid #ccc; border-top: 1px solid #888; border-radius: 3px; display: flex; align-items: center; gap: 8px; color: #888; }
.brand { width: 84px; padding-left: 5px; font: bold 17px/22px "Open Sans", sans-serif; letter-spacing: .2px; color: #222; }
.bar { display: inline-block; line-height: 13px; background: linear-gradient(#e03030, #e03030) center 0 / 7px 2px no-repeat; }
.tabs { height: 31px; flex: none; border-top: 4px solid #cc0000; display: flex; align-items: flex-end; }
.tab { width: 58px; height: 23px; border: 1px solid #bbb; border-bottom: 0; border-left-color: #fff; padding: 3px 0 0 8px; background: #f3f3f3; }
.addtab { width: 22px; height: 23px; border: 1px solid #aaa; border-radius: 3px; background: linear-gradient(#eee, #bbb); display: flex; align-items: center; justify-content: center; }

.toolbar { flex: none; display: flex; align-items: center; background: linear-gradient(#ececec, #b9b9b9); border-bottom: 1px solid #8c8c8c; }
.toolbar svg { width: 23px; height: 21px; margin: 0 4px; }
.t1 { height: 32px; border-top: 2px solid #fff; padding-left: 2px; margin-right: 2px; }
.grp { display: flex; align-items: center; height: 29px; border-right: 1px solid #999; }
.g1 { width: 131px; } .g2 { width: 217px; } .g3 { width: 269px; } .g4 { width: 226px; } .g5 { border: 0; }
.grip { width: 5px; height: 18px; border-left: 1px solid #888; border-right: 1px solid #888; background: linear-gradient(90deg, transparent 1px, #888 1px 2px, transparent 2px); margin: 0 0 0 2px; flex: none; }
.sep { width: 1px; height: 18px; background: #777; margin: 0 1px; flex: none; }
.toolbar .g2 svg { margin: 0 3px; }
.g2 .grip { margin-right: 3px; } .g2 .sep { margin: 0 2px 0 3px; }
.toolbar .g3 svg { margin: 0 3.8px; }
.dn { width: 12px; flex: none; display: flex; justify-content: center; }
.dn::before { content: ""; border: 4px solid transparent; border-top: 5px solid #c00000; border-bottom: 0; }
.t2 { height: 30px; padding: 0 1px 1px 3px; }
.pressed { border: 1px solid #000; border-radius: 6px; display: flex; align-items: center; justify-content: center; background: linear-gradient(#b5b5b5, #e9e9e9); flex: none; }
.p1 { width: 29px; height: 28px; } .p2 { width: 11px; height: 28px; } .p3 { width: 28px; height: 28px; }
.t2 .p2 + svg { margin: 0 3px; }
.toolbar .c26 { margin: 0 3px; } .toolbar .c34 { margin: 0 3px; }
.toolbar .glasses { margin: 0 4px 0 5px; }
.s0 { margin: 0 2px; }

.work { height: 883px; flex: none; display: flex; }
.side { width: 43px; border-left: 2px solid #efefef; background: linear-gradient(90deg, #e9e9e9, #b5b5b5); border-bottom: 1px solid #999; }
.hgrip { display: block; height: 5px; margin: 6px 4px -4px; border-top: 1px solid #888; border-bottom: 1px solid #888; background: linear-gradient(transparent 1px, #888 1px 2px, transparent 2px); }
.side svg { width: 21px; height: 21px; }
.sd, .sc, .sp, .sp2 { height: 30px; display: flex; align-items: center; }
.sd svg { margin: 0 5px 0 4px; }
.dash { width: 7px; height: 1px; background: #333; margin-left: 3px; }
.sc svg { margin-left: 9px; }
.sp { padding-left: 1px; }
.q1 { width: 29px; height: 28px; } .q2 { width: 10px; height: 26px; }
.q3 { width: 29px; height: 28px; margin-left: 6px; }
.canvas { width: 1530px; background: #000; position: relative; }
.corner { position: absolute; right: 0; top: 0; width: 23px; height: 25px; background: #e9e9e9; border: 1px solid #f8f8f8; display: grid; grid-template-columns: 5px 5px; grid-auto-rows: 6px; gap: 4px 5px; padding: 2px 3px; }
.c1 { background: #b9484b; } .c2 { background: #33963a; } .c3 { background: #dda03b; } .c4 { background: #4f6cac; }
.split { width: 6px; background: linear-gradient(90deg, #b3b3bb, #d5d5da 3px); }
.colors { width: 341px; display: flex; flex-direction: column; border-right: 2px solid #222; }
.allc { width: 78px; height: 22px; border: 1px solid #aaa; border-bottom: 2px solid #999; border-radius: 10px; background: linear-gradient(#fff, #bbb); text-align: center; line-height: 20px; }
.treebox { margin: 1px 3px 0 0; height: 818px; border: 3px solid #333; border-right: 1px solid #fff; border-bottom: 1px solid #ddd; border-top-color: #444; background: #fff; display: flex; }
.treemain { flex: 1; overflow: hidden; }
.treehead { height: 19px; background: linear-gradient(#aaa, #c9c9c9 30%, #a4a4a4); display: flex; justify-content: flex-end; padding-right: 1px; border-right: 1px solid #777; }
.treehead span { width: 16px; text-align: center; line-height: 19px; }
.tr { height: 17px; display: flex; align-items: center; line-height: 17px; }
.tr.hl { background: #808080; }
.tr .v1 { width: 12px; align-self: stretch; border-right: 1px dotted #555; flex: none; }
.tr.lastg .v1 { height: 8px; align-self: flex-start; }
.tr .v2 { width: 20px; align-self: stretch; border-right: 1px dotted #555; flex: none; }
.tr.end .v2 { height: 9px; align-self: flex-start; }
.tr .h { width: 9px; border-top: 1px dotted #555; flex: none; }
.tr .o { width: 8px; height: 8px; border: 1px dashed #bbb; border-radius: 50%; margin: 0 1px 0 3px; flex: none; }
.tr.hl .o { background: #fff; border-color: #fff; }
.tr .ex { width: 9px; height: 9px; border: 1px solid #333; background: #fff; margin: 0 0 0 -5px; flex: none; display: flex; align-items: center; justify-content: center; }
.tr .ex::before { content: ""; width: 5px; height: 5px; background: linear-gradient(#000, #000) 0 2px / 5px 1px no-repeat; }
.tr .ex.plus::before { background: linear-gradient(#000, #000) 0 2px / 5px 1px no-repeat, linear-gradient(#000, #000) 2px 0 / 1px 5px no-repeat; }
.tr .hh { width: 5px; border-top: 1px dotted #555; margin-right: 2px; flex: none; }
.tr .nm { flex: 1; }
.tr .nm.g { font-weight: bold; letter-spacing: -.4px; }
.sw { width: 16px; height: 16px; background: #fff; shape-rendering: crispEdges; }
.c16 { width: 16px; height: 17px; flex: none; display: flex; align-items: center; }
.c16 .cb { margin-left: 1px; }

.cb { width: 12px; height: 12px; flex: none; display: inline-block; background: linear-gradient(#fff, #d4d4d4); border: 1px solid #d2d2d2; border-bottom: 1px solid #666; border-radius: 1px; }
.cb.on { background: url("data:image/svg+xml,%3Csvg xmlns='http://www.w3.org/2000/svg' viewBox='0 0 10 10'%3E%3Cpath d='M1.500 4.500l2.500 3.500L9 1.500' fill='none' stroke='%23c80000' stroke-width='2.200'/%3E%3C/svg%3E") no-repeat, linear-gradient(#fff, #d4d4d4); }
.cb.off { background: linear-gradient(#f4f4f4, #e2e2e2); border-bottom-color: #aaa; }
.cb.on.off { background: url("data:image/svg+xml,%3Csvg xmlns='http://www.w3.org/2000/svg' viewBox='0 0 10 10'%3E%3Cpath d='M1.500 4.500l2.500 3.500L9 1.500' fill='none' stroke='%23a86565' stroke-width='2.200'/%3E%3C/svg%3E") no-repeat, linear-gradient(#f4f4f4, #e2e2e2); }
.hl .cb.on.off { filter: brightness(.65); }
.cb.part2 { background: linear-gradient(#cc1010, #cc1010) 3px 3px / 5px 4px no-repeat, linear-gradient(#fff, #d4d4d4); }
.lb { margin-left: 6px; }
.rd { width: 12px; height: 12px; flex: none; border-radius: 50%; border: 1px solid #bbb; border-bottom-color: #777; background: linear-gradient(#fff, #ddd); }
.rd.on { background: radial-gradient(circle, #c40000 0 2.6px, #f4f4f4 3.4px); }
.lr { margin-left: 6px; }
.rd.sp8 { margin-left: 7px; }

.vs { width: 16px; flex: none; display: flex; flex-direction: column; background: #8f8f8f; }
.ar { width: 16px; height: 16px; flex: none; background: linear-gradient(#ececec, #c6c6c6); border-bottom: 1px solid #444; display: flex; align-items: center; justify-content: center; }
.ar::before { content: ""; border: 4px solid transparent; filter: drop-shadow(0 0 .6px #888); }
.up::before { border-bottom: 8px solid #fafafa; border-top: 0; }
.down::before { border-top: 8px solid #fafafa; border-bottom: 0; }
.lf::before { border-right: 8px solid #fafafa; border-left: 0; }
.rg::before { border-left: 8px solid #fafafa; border-right: 0; }
.track { flex: 1; display: flex; flex-direction: column; }
.thumb { display: block; border: 1px solid #777; border-radius: 8px; background: repeating-linear-gradient(#777 0 1px, transparent 1px 3px) center / 6px 9px no-repeat, #b8b8b8; }
.colors .thumb { margin-top: 269px; height: 513px; }
.detail { display: flex; align-items: center; padding: 0 8px 0 3px; margin-top: 4px; height: 36px; justify-content: space-between; }
.detail svg { margin-left: 5px; margin-top: 2px; }

.status { height: 31px; flex: none; border-top: 2px solid #fff; border-bottom: 2px solid #222; display: flex; align-items: center; background: #fff; padding: 0 5px 2px 2px; margin-right: 2px; }
.qb { width: 25px; height: 25px; border: 1px solid #666; border-right: 2px solid #000; border-bottom: 2px solid #000; font-weight: bold; font-size: 14px; text-align: center; line-height: 22px; margin-right: 3px; background: #fff; }
.q2b { padding: 1px; }
.msg { flex: 1; height: 25px; border: 1px solid #777; border-top: 2px solid #555; border-bottom: 0; padding: 0 5px 0 2px; display: flex; align-items: center; justify-content: space-between; background: #fff; margin-left: 1px; }
.msg b { letter-spacing: 0; color: #555; font-size: 12px; }
.n0 { color: #3556d0; margin-right: 4px; } .mem { color: #4fbdc6; margin-left: 4px; }
.taskbar { height: 26px; flex: none; border-top: 1px solid #ccc; display: flex; align-items: center; color: #222; font-size: 13.5px; letter-spacing: -.3px; padding-bottom: 1px; }
.k1 { margin-left: 3px; } .k2 { margin-left: 8px; } .k3 { margin-left: 14px; }
.us { width: 18px; margin-left: 11px; font-size: 14px; } .k4 { margin-left: 7px; } .k5 { margin-left: 7px; } .k6 { margin-left: 10px; }
.clock { width: 62px; margin-left: 10px; font-size: 12.5px; }
.task { display: flex; align-items: center; gap: 3px; }
.task.a { width: 269px; } .task.b { width: 270px; height: 25px; border: 1px solid #ccc; border-radius: 4px; padding-left: 4px; } .task.c { margin-left: 9px; gap: 5px; color: #999; }
.fade { background: linear-gradient(90deg, #222 92%, #bbb 95%, #e8e8e8); background-clip: text; -webkit-background-clip: text; color: transparent; }
.swirl { margin-left: auto; }

.dialog { position: absolute; left: 400px; top: 108px; width: 816px; height: 896px; background: #efefef; border-radius: 7px 7px 4px 4px; overflow: hidden; display: flex; flex-direction: column; }
.dtitle { height: 22px; background: #d6d2ce; border-top: 1px solid #fff; display: flex; align-items: center; justify-content: flex-end; font-weight: bold; font-size: 13px; color: #222; padding-bottom: 1px; }
.dtitle > span { margin-top: -2px; letter-spacing: 0; }
.dtitle .winbtns { margin-left: 295px; }
.dtitle .winbtns .last { margin-left: 13px; margin-right: 6px; }
.dbody { margin: 6px 7px 0 6px; height: 819px; border: 2px solid #000; border-color: #000 #fff #fff #000; display: flex; padding-top: 1px; }
.row { display: flex; align-items: center; height: 22px; }
.left { width: 284px; flex: none; }
.part { margin-top: 30px; padding-left: 1px; } .part > span:first-child { width: 51px; }
.combo { height: 22px; border: 1px solid #999; border-radius: 4px; background: linear-gradient(#fff, #dedede); display: flex; align-items: center; padding-left: 2px; overflow: hidden; }
.combo span { flex: 1; }
.combo i { width: 16px; height: 22px; background: linear-gradient(#c80000, #900000); display: flex; align-items: center; justify-content: center; }
.combo i::before { content: ""; border: 4px solid transparent; border-top-color: #fff; border-bottom: 0; }
.pc { width: 176px; } .se { width: 409px; }
.show { margin-top: 31px; } .show, .show + .row { padding-left: 0; }
.preview { background: #fff; border-left: 2px solid #000; border-top: 2px solid #333; font-size: 14px; overflow: visible; }
.preview text { text-anchor: middle; fill: #111; }
fieldset { min-width: 0; border: 1px solid #aaa; border-radius: 5px; }
legend { color: #cc0000; font-weight: bold; line-height: 18px; height: 18px; letter-spacing: -.4px; padding: 0 5px; }
.pg { height: 485px; padding: 0 8px 0 7px; }
.r1 { margin-top: 8px; } .r1 > span { width: 102px; }
.pill { height: 23px; border: 1px solid #b5b5b5; border-bottom: 2px solid #999; border-radius: 10px; background: linear-gradient(#fff, #bdbdbd); display: flex; align-items: center; justify-content: center; line-height: 19px; color: #111; flex: none; }
.pill span { flex: 1; text-align: center; }
.rt { border: 4px solid transparent; border-left: 5px solid #c00000; border-right: 0; margin-right: 8px; }
.r1 .pill { width: 166px; }
.list { margin-top: 0; height: 268px; border: 2px solid #222; border-right: 1px solid #fff; border-bottom: 1px solid #fff; display: flex; background: #fff; }
.items { flex: 1; overflow: hidden; }
.items p { height: 17px; line-height: 17px; padding-left: 2px; } .items .s { background: #808080; color: #f2fbff; }
.list .thumb { height: 139px; }
.tools { display: flex; margin-top: 1px; height: 30px; justify-content: flex-end; }
.bev { width: 34px; height: 30px; background: #ededed; border: 2px solid #fff; border-right-color: #000; border-bottom-color: #000; display: flex; align-items: center; justify-content: center; flex: none; box-shadow: inset -2px -2px #fff; }
.bev svg { width: 20px; height: 20px; }
.box { height: 131px; border: 1px solid #555; padding: 6px 6px 0; }
.sb { width: 44px; }
.find { height: 30px; } .find > span { width: 54px; } .fp { width: 166px; }
.inp { height: 23px; border: 1px solid #ccc; border-top: 2px solid #888; border-radius: 3px; background: #fff; display: flex; align-items: center; padding-left: 3px; flex: none; }
.pa { width: 516px; height: 812px; padding: 0 7px; }
.pins { height: 30px; margin-top: 7px; }
.rl { width: 92px; text-align: right; padding-right: 2px; }
.ro { width: 375px; background: #efefef; justify-content: flex-end; padding-right: 5px; overflow: hidden; }
.layers { height: 78px; border: 2px solid #222; border-right: 1px solid #fff; border-bottom: 1px solid #fff; width: 500px; }
.lv { display: flex; height: 60px; overflow: hidden; }
.lrows { flex: 1; overflow: hidden; }
.lrow { display: flex; height: 23px; align-items: center; }
.lrow span { width: 41px; flex: none; text-align: right; }
.lrow b { width: 66px; height: 23px; flex: none; font-weight: normal; text-align: center; line-height: 21px; background: linear-gradient(#f4f4f4, #bcbcbc); border: 1px solid #aaa; border-radius: 5px; }
.lrow .sel { border-color: #000; background: linear-gradient(#bbb, #f4f4f4); }
.lrow.d { color: #999; } .lrow.d b { background: linear-gradient(#cfcfcf, #b4b4b4); }
.lv .ar { height: 15px; } .lv .thumb { height: 24px; }
.hs { height: 15px; display: flex; background: #8f8f8f; width: 481px; }
.hs .ar { height: 15px; } .hs .thumb { width: 241px; height: 15px; background: repeating-linear-gradient(90deg, #777 0 1px, transparent 1px 2px) center / 9px 6px no-repeat, #b8b8b8; }
.depth { height: 23px; margin-top: 2px; } .dw { width: 186px; } .wl { width: 37px; padding-left: 1px; } .dw2 { width: 185px; }
.loc { height: 523px; padding: 0 7px; }
.loc .first { margin-top: 7px; }
.st { height: 24px; } .stl { width: 94px; padding-left: 25px; } .st .pill { width: 366px; }
.pnl { width: 103px; padding-left: 25px; } .pn .pill { width: 357px; }
.dp { background: linear-gradient(#ddd, #b5b5b5); color: #999; } .dp .rt { border-left-color: #888; }
.ra { padding-left: 24px; }
.pos { height: 145px; padding: 0 7px; margin-top: 1px; } .pos > legend { padding: 0 2px; }
.cols { display: flex; justify-content: space-between; margin-top: 7px; }
.abs { width: 271px; height: 113px; padding: 0 6px; } .off2 { width: 175px; height: 113px; padding: 0 6px; }
.cols legend { display: flex; align-items: center; gap: 5px; padding: 0 4px; }
.abs .g { margin-top: 6px; padding-left: 1px; } .co { height: 30px; }
.co .cx { width: 85px; text-align: right; padding-right: 1px; } .co .inp { width: 62px; } .cy { width: 14px; padding-left: 4px; }
.di { background: #dfdfdf; color: #888; }
.off2 .row { height: 23px; } .off2 .o { margin-top: 7px; } .off2 .cx { width: 71px; text-align: right; } .off2 .inp { width: 90px; }
.dir { margin-top: 3px; } .dir > span { width: 120px; } .dir .pill { width: 84px; } .dir .pill, .use .pill { padding-left: 2px; }
.spc { height: 23px; margin-top: 0; } .spc > span { width: 84px; text-align: right; } .spc .inp { width: 400px; }
.unit > span:first-child { width: 73px; text-align: right; }
.snap { height: 95px; padding: 0 7px; }
.loc .snap .first { margin-top: 7px; }
.fix { margin-top: 3px; padding-left: 1px; } .fix + .row { padding-left: 1px; } .w1 { width: 112px; } .w2 { width: 73px; }
.honor { padding-left: 11px; }
.use { height: 30px; margin-top: 4px; padding-left: 1px; } .use > span { width: 25px; } .use .pill { width: 71px; }
.dbtns { margin-top: 6px; border-top: 1px solid #fff; height: 38px; display: flex; align-items: center; justify-content: space-evenly; flex: none; padding: 0 3px; }
.ok { width: 61px; background: linear-gradient(#d00000, #9e0000); border-color: #a33; color: #fff; font-weight: bold; } .ap { width: 63px; border-color: #666; } .ap em { border: 1px dotted #000; width: 55px; height: 17px; line-height: 15px; text-align: center; } .al { width: 82px; } .ca { width: 64px; }
.dfoot { flex: 1; border-top: 1px solid #444; background: #d6d2ce; }
```
FILE: script.js
```
// name, swatch [pattern, colour], visible, selectable
// states: 1 checked, 0 empty, 2 partial, 3 checked disabled, 4 empty disabled, null none
const rows = [
  ['S. Resize Line', ['solid', '#ffff00'], 1, null],
  ['E. Resize Line', ['solid', '#008000'], 1, null],
  ['MP CongTag', ['solid', '#ff0000'], 1, 1],
  ['IO Cluster', ['cross', '#009000'], 1, 1],
  ['Overlap Macro', null, 0, null],
  ['Overlap Guide', ['solid', '#0000ff'], 0, null],
  ['Overlap Block', ['solid', '#008000'], 0, null],
  ['Datapath', ['lines', '#add8e6'], 1, 1, 'end'],
  ['+Partition', null, 1, 1],
  ['-Power', null, 2, 2],
  ['Power Domain', ['check', '#e00000'], 1, 1],
  ['Power Graph', ['bars', '#0050d8'], 0, 4],
  ['Sub. Noise', ['check', '#0060ff'], 0, null],
  ['IR Drop & EM', ['check', '#005070'], 1, 1, 'end'],
  ['+Overlay', null, 0, 3],
  ['+Track', null, 0, null],
  ['+Net', null, 1, 1],
  ['+Route', null, 1, 1],
  ['-Layer', null, 2, 1],
  ['Poly(0)', ['fwd4', '#f4a460'], 1, 1],
  ['Cont(0)', ['dots', '#0000dd'], 1, 1],
  ['Metal1(1)', ['back4', '#0000dd'], 1, 1],
  ['Via1(1)', ['dots', '#ff0000'], 0, 3],
  ['Metal2(2)', ['fwd4', '#ff0000'], 0, 3, 'hl'],
  ['Via2(2)', ['dots', '#00cd00'], 1, 1],
  ['Metal3(3)', ['back8', '#00cd00'], 1, 1],
  ['Via3(3)', ['dots', '#cdcd00'], 1, 1],
  ['Metal4(4)', ['fwd8', '#cdcd00'], 1, 1],
  ['Via4(4)', ['dots', '#a52a2a'], 1, 1],
  ['Metal5(5)', ['back8', '#a52a2a'], 1, 1],
  ['Via5(5)', ['dots', '#ffa500'], 1, 1],
  ['Metal6(6)', ['fwd8', '#ffa500'], 1, 1],
  ['Via6(6)', ['dots', '#cd00cd'], 1, 1],
  ['Metal7(7)', ['back8', '#cd00cd'], 1, 1],
  ['Via7(7)', ['dots', '#00cdcd'], 1, 1],
  ['Metal8(8)', ['fwd8', '#00cdcd'], 1, 1],
  ['Via8(8)', ['dots', '#8b4513'], 1, 1],
  ['Metal9(9)', ['back8', '#8b4513'], 1, 1],
  ['Via9(9)', ['dots', '#ffff00'], 1, 1],
  ['Metal10(10)', ['fwd8', '#ffff00'], 1, 1],
  ['Via10(10)', ['dots', '#008000'], 1, 1],
  ['Metal11(11)', ['back8', '#008000'], 1, 1],
  ['Via 1112', ['dots', '#ff00ff'], 1, 1, 'end'],
  ['+Bump', null, 1, 1],
  ['+Grid', null, 0, null],
  ['+Miscellaneous', null, 2, 1, 'lastg']
];

function swatch([kind, color]) {
  let body = '';
  const line = (d, extra = '') => { body += `<path d="${d}" stroke="${color}" fill="none" ${extra}/>`; };
  if (kind === 'solid') body = `<rect width="16" height="16" fill="${color}"/>`;
  if (kind === 'cross') line('M9.500 0V16M0 6.500H16');
  if (kind === 'lines') line('M0 4.500H16M0 8.500H16M0 12.500H16');
  if (kind === 'dots') for (let y = 2, k = 0; y < 15; y += 2, k++) line(`M${k % 2 ? 2 : 4} ${y + 0.5}H15`, 'stroke-dasharray="1 3"');
  if (kind === 'check') for (let y = 1; y < 15; y++) line(`M${y % 2} ${y + 0.5}H15`, 'stroke-dasharray="1 1"');
  if (kind === 'bars') for (let x = 2; x < 15; x += 2) line(`M${x + 0.5} 1V15`, x % 4 ? '' : 'stroke-dasharray="1 1"');
  const m = kind.match(/^(fwd|back)(\d)/);
  if (m) for (let o = -16; o < 32; o += +m[2]) line(m[1] === 'fwd' ? `M${o} 16L${o + 16} 0` : `M${o} 0L${o + 16} 16`);
  return `<svg class="sw" viewBox="0 0 16 16">${body}<rect x=".5" y=".5" width="15" height="15" fill="none" stroke="${color}"/></svg>`;
}

const states = { 0: 'cb', 1: 'cb on', 2: 'cb part2', 3: 'cb on off', 4: 'cb off' };
const box = s => `<span class="c16">${s === null ? '' : `<i class="${states[s]}"></i>`}</span>`;

document.getElementById('tree').innerHTML = rows.map(([name, sw, v, s, cls]) => {
  const group = /^[+-]/.test(name);
  const label = (group ? name.slice(1) : name).replace('&', '&amp;');
  const head = group
    ? `<i class="v1"></i><i class="ex ${name[0] === '+' ? 'plus' : ''}"></i><i class="hh"></i><span class="nm g">${label}</span>`
    : `<i class="v1"></i><i class="v2"></i><i class="h"></i><i class="o"></i><span class="nm">${label}</span>`;
  return `<div class="tr ${cls || ''}">${head}<span class="c16">${sw ? swatch(sw) : ''}</span>${box(v)}${box(s)}</div>`;
}).join('');
```
